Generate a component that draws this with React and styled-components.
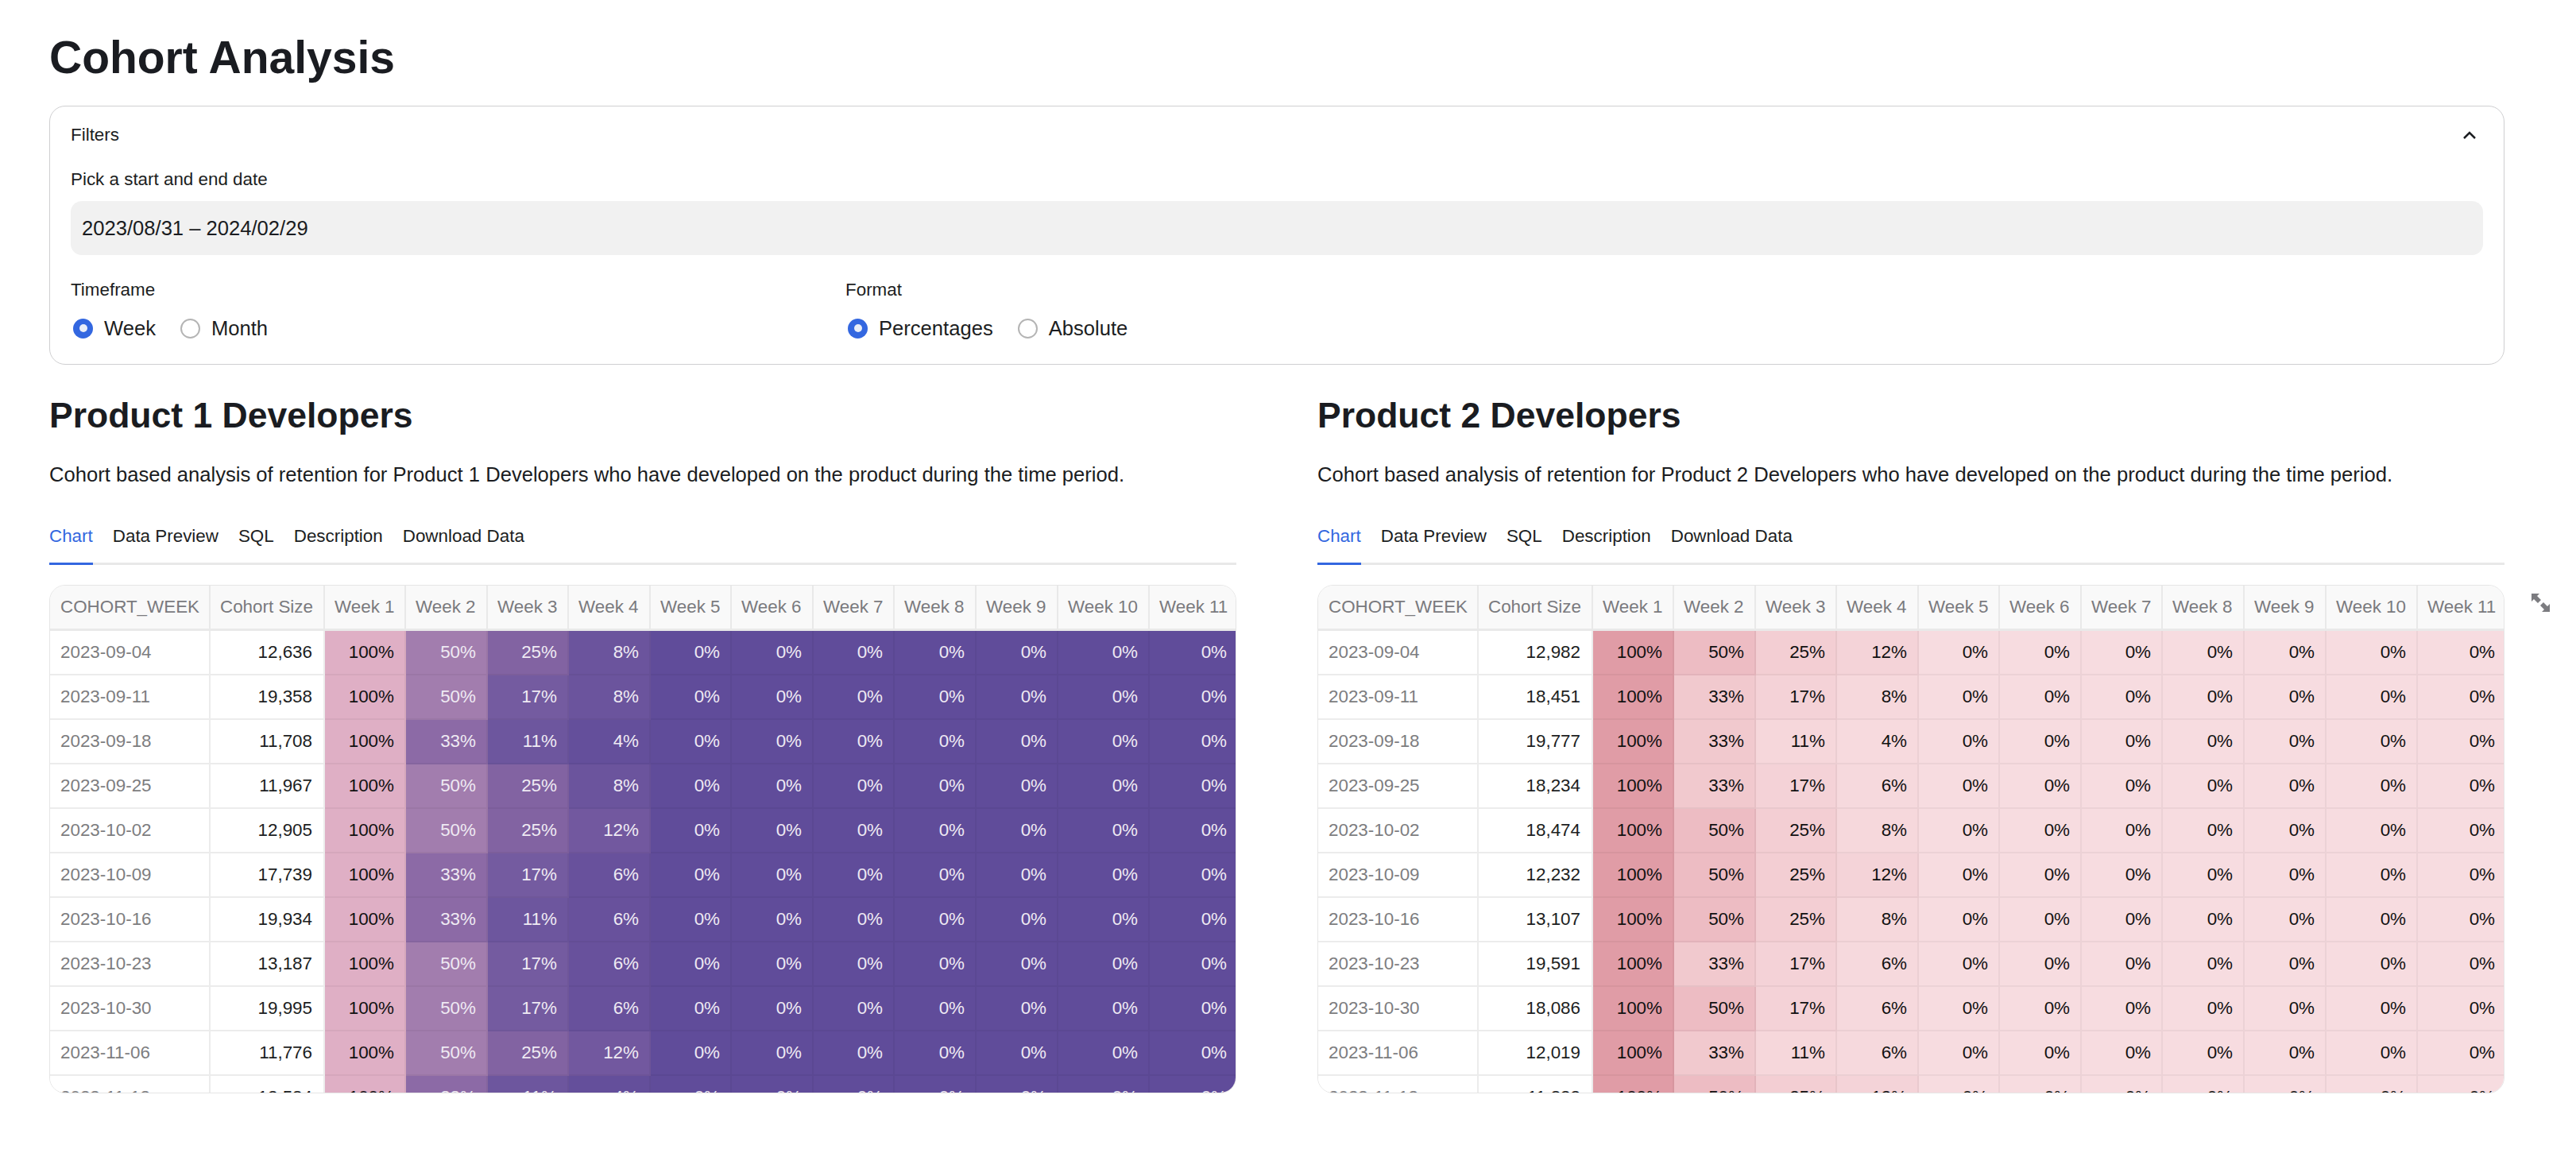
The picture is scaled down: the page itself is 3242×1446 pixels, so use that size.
import React from 'react';
import styled, {createGlobalStyle} from 'styled-components';

const GlobalStyle = createGlobalStyle`
  html, body {
    margin: 0;
    padding: 0;
    background: #fff;
    overflow: hidden;
  }
  body {
    font-family: "Liberation Sans", Arial, sans-serif;
    color: #1c1e22;
  }
`;

const Page = styled.div`
  width: 3242px;
  height: 1446px;
  box-sizing: border-box;
  padding: 36px 90px 0 62px;
`;

const Title = styled.h1`
  margin: 0 0 25px;
  font-size: 57px;
  line-height: 72px;
  font-weight: 700;
  color: #1a1c21;
`;

const FilterCard = styled.section`
  box-sizing: border-box;
  height: 326px;
  border: 1px solid #cfcfd1;
  border-radius: 20px;
  padding: 0 26px;
`;

const FilterHeader = styled.div`
  height: 71px;
  display: flex;
  align-items: center;
  justify-content: space-between;
  font-size: 22.4px;
  padding-right: 8px;
`;

const FieldLabel = styled.div`
  font-size: 22.4px;
  line-height: 30px;
`;

const DateLabel = styled(FieldLabel)`
  margin-top: 6px;
`;

const DateInput = styled.div`
  height: 68px;
  margin-top: 12px;
  padding: 0 14px;
  display: flex;
  align-items: center;
  background: #f1f1f1;
  border-radius: 14px;
  font-size: 25.6px;
  color: #1a1c21;
`;

const OptionsGrid = styled.div`
  display: grid;
  grid-template-columns: 975px 1fr;
  margin-top: 29px;
`;

const RadioRow = styled.div`
  display: flex;
  gap: 31px;
  margin-top: 20px;
  padding-left: 3px;
`;

const RadioOption = styled.label`
  display: flex;
  align-items: center;
  gap: 14px;
  height: 26px;
  font-size: 25.6px;
  color: #1c1e22;
`;

const RadioMark = styled.span`
  box-sizing: border-box;
  width: 25px;
  height: 25px;
  border-radius: 50%;
  display: flex;
  align-items: center;
  justify-content: center;
  background: ${p => (p.$on ? '#3367e0' : '#fff')};
  border: ${p => (p.$on ? 'none' : '2px solid #b4b4b4')};
  &::after {
    content: '';
    display: ${p => (p.$on ? 'block' : 'none')};
    width: 10px;
    height: 10px;
    border-radius: 50%;
    background: #e9eef8;
  }
`;

const Panels = styled.div`
  display: grid;
  grid-template-columns: 1494px 1494px;
  column-gap: 102px;
  margin-top: 34px;
`;

const Panel = styled.section`
  min-width: 0;
`;

const PanelTitle = styled.h2`
  margin: 0;
  font-size: 44.5px;
  line-height: 60px;
  font-weight: 700;
  color: #1a1c21;
`;

const Description = styled.p`
  margin: 26px 0 0;
  font-size: 25.6px;
  line-height: 36px;
  color: #1a1c21;
`;

const TabBar = styled.div`
  display: flex;
  gap: 25px;
  height: 72px;
  box-sizing: border-box;
  margin-top: 24px;
  border-bottom: 3px solid #e8e8e8;
`;

const Tab = styled.div`
  height: 72px;
  box-sizing: border-box;
  padding-top: 3px;
  display: flex;
  align-items: center;
  font-size: 22.4px;
  color: ${p => (p.$active ? '#3367e0' : '#1c1e22')};
  border-bottom: 3px solid ${p => (p.$active ? '#3367e0' : 'transparent')};
`;

const TableWrap = styled.div`
  position: relative;
  margin-top: 25px;
`;

const TableClip = styled.div`
  box-sizing: border-box;
  height: 640px;
  overflow: hidden;
  border: 1px solid #e6e6e6;
  border-radius: 20px;
`;

const Table = styled.table`
  width: 1492px;
  table-layout: fixed;
  border-collapse: separate;
  border-spacing: 0;
  font-size: 22.4px;
`;

const HeadCell = styled.th`
  box-sizing: border-box;
  height: 57px;
  padding: 0 0 0 12px;
  text-align: left;
  font-weight: 400;
  white-space: nowrap;
  color: #7a7a7e;
  background: #f9f9f9;
  border-right: 2px solid #e9e9e9;
  border-bottom: 3px solid #e9e9e9;
  &:first-child {
    padding-left: 13px;
  }
  &:last-child {
    border-right: none;
  }
`;

const DateCell = styled.td`
  box-sizing: border-box;
  height: 56px;
  padding: 0 0 0 13px;
  color: #7d7d80;
  background: #fff;
  border-right: 2px solid #ececec;
  border-bottom: 2px solid #ececec;
`;

const SizeCell = styled(DateCell)`
  padding: 0 14px 0 0;
  text-align: right;
  color: #1c1e22;
`;

const HeatCell = styled.td`
  box-sizing: border-box;
  height: 56px;
  padding: 0 13px 0 0;
  text-align: right;
  color: ${p => p.$ink};
  background: ${p => p.$bg};
  border-right: 2px solid rgba(0, 0, 0, 0.045);
  border-bottom: 2px solid rgba(0, 0, 0, 0.045);
  &:last-child {
    border-right: none;
  }
`;

const ExpandButton = styled.div`
  position: absolute;
  top: 11px;
  right: -57px;
  width: 23px;
  height: 23px;
  line-height: 0;
`;

const purpleScale = {
  100: '#dfafc5', 50: '#a27dae', 33: '#8c6aa6', 25: '#8263a2', 17: '#745ba0',
  12: '#72589f', 11: '#6d569e', 8: '#6b549d', 6: '#68519c', 4: '#644f9b', 0: '#604c9a',
};

const pinkScale = {
  100: '#e09ca6', 50: '#edbcc3', 33: '#f1c9ce', 25: '#f3ced3', 17: '#f4d2d7',
  12: '#f4d3d8', 11: '#f6d7db', 8: '#f6d8dc', 6: '#f6d9dd', 4: '#f7dade', 0: '#f7dce0',
};

const weekHeads = ['Week 1', 'Week 2', 'Week 3', 'Week 4', 'Week 5', 'Week 6', 'Week 7', 'Week 8', 'Week 9', 'Week 10', 'Week 11'];
const colWidths = [202, 144, 102, 103, 102, 103, 102, 103, 102, 103, 103, 115, 110];

const dates = ['2023-09-04', '2023-09-11', '2023-09-18', '2023-09-25', '2023-10-02', '2023-10-09', '2023-10-16', '2023-10-23', '2023-10-30', '2023-11-06', '2023-11-13'];

const productOne = {
  title: 'Product 1 Developers',
  scale: purpleScale,
  ink: v => (v === 100 ? '#111' : '#efeaf3'),
  sizes: ['12,636', '19,358', '11,708', '11,967', '12,905', '17,739', '19,934', '13,187', '19,995', '11,776', '12,584'],
  weeks: [[50, 25, 8], [50, 17, 8], [33, 11, 4], [50, 25, 8], [50, 25, 12], [33, 17, 6], [33, 11, 6], [50, 17, 6], [50, 17, 6], [50, 25, 12], [33, 11, 4]],
};

const productTwo = {
  title: 'Product 2 Developers',
  scale: pinkScale,
  ink: () => '#111',
  sizes: ['12,982', '18,451', '19,777', '18,234', '18,474', '12,232', '13,107', '19,591', '18,086', '12,019', '11,833'],
  weeks: [[50, 25, 12], [33, 17, 8], [33, 11, 4], [33, 17, 6], [50, 25, 8], [50, 25, 12], [50, 25, 8], [33, 17, 6], [50, 17, 6], [33, 11, 6], [50, 25, 12]],
};

const ChevronUp = () => (
  <svg width="18" height="12" viewBox="0 0 18 12" fill="none">
    <polyline points="2,10 9,3 16,10" stroke="#1c1e22" strokeWidth="2.5" />
  </svg>
);

const ExpandIcon = () => (
  <svg width="23" height="23" viewBox="0 0 23 23" fill="#7c7c80">
    <polygon points="0,0 10,0 7,3 12,8 8,12 3,7 0,10" />
    <polygon points="23,23 13,23 16,20 11,15 15,11 20,16 23,13" />
  </svg>
);

const Radio = ({label, on}) => (
  <RadioOption>
    <RadioMark $on={on} />
    {label}
  </RadioOption>
);

const CohortTable = ({data}) => (
  <TableClip>
    <Table>
      <colgroup>
        {colWidths.map((w, i) => <col key={i} width={w} />)}
      </colgroup>
      <thead>
        <tr>
          <HeadCell>COHORT_WEEK</HeadCell>
          <HeadCell>Cohort Size</HeadCell>
          {weekHeads.map(h => <HeadCell key={h}>{h}</HeadCell>)}
        </tr>
      </thead>
      <tbody>
        {dates.map((date, r) => {
          const values = [100, ...data.weeks[r], 0, 0, 0, 0, 0, 0, 0];
          return (
            <tr key={date}>
              <DateCell>{date}</DateCell>
              <SizeCell>{data.sizes[r]}</SizeCell>
              {values.map((v, c) => (
                <HeatCell key={c} $bg={data.scale[v]} $ink={data.ink(v)}>{v}%</HeatCell>
              ))}
            </tr>
          );
        })}
      </tbody>
    </Table>
  </TableClip>
);

const ProductPanel = ({data, expandable}) => (
  <Panel>
    <PanelTitle>{data.title}</PanelTitle>
    <Description>
      Cohort based analysis of retention for {data.title} who have developed on the product during the time period.
    </Description>
    <TabBar>
      <Tab $active>Chart</Tab>
      <Tab>Data Preview</Tab>
      <Tab>SQL</Tab>
      <Tab>Description</Tab>
      <Tab>Download Data</Tab>
    </TabBar>
    <TableWrap>
      <CohortTable data={data} />
      {expandable && <ExpandButton><ExpandIcon /></ExpandButton>}
    </TableWrap>
  </Panel>
);

export default function App() {
  return (
    <Page>
      <GlobalStyle />
      <Title>Cohort Analysis</Title>
      <FilterCard>
        <FilterHeader>
          Filters
          <ChevronUp />
        </FilterHeader>
        <DateLabel>Pick a start and end date</DateLabel>
        <DateInput>2023/08/31 – 2024/02/29</DateInput>
        <OptionsGrid>
          <div>
            <FieldLabel>Timeframe</FieldLabel>
            <RadioRow>
              <Radio label="Week" on />
              <Radio label="Month" />
            </RadioRow>
          </div>
          <div>
            <FieldLabel>Format</FieldLabel>
            <RadioRow>
              <Radio label="Percentages" on />
              <Radio label="Absolute" />
            </RadioRow>
          </div>
        </OptionsGrid>
      </FilterCard>
      <Panels>
        <ProductPanel data={productOne} />
        <ProductPanel data={productTwo} expandable />
      </Panels>
    </Page>
  );
}
